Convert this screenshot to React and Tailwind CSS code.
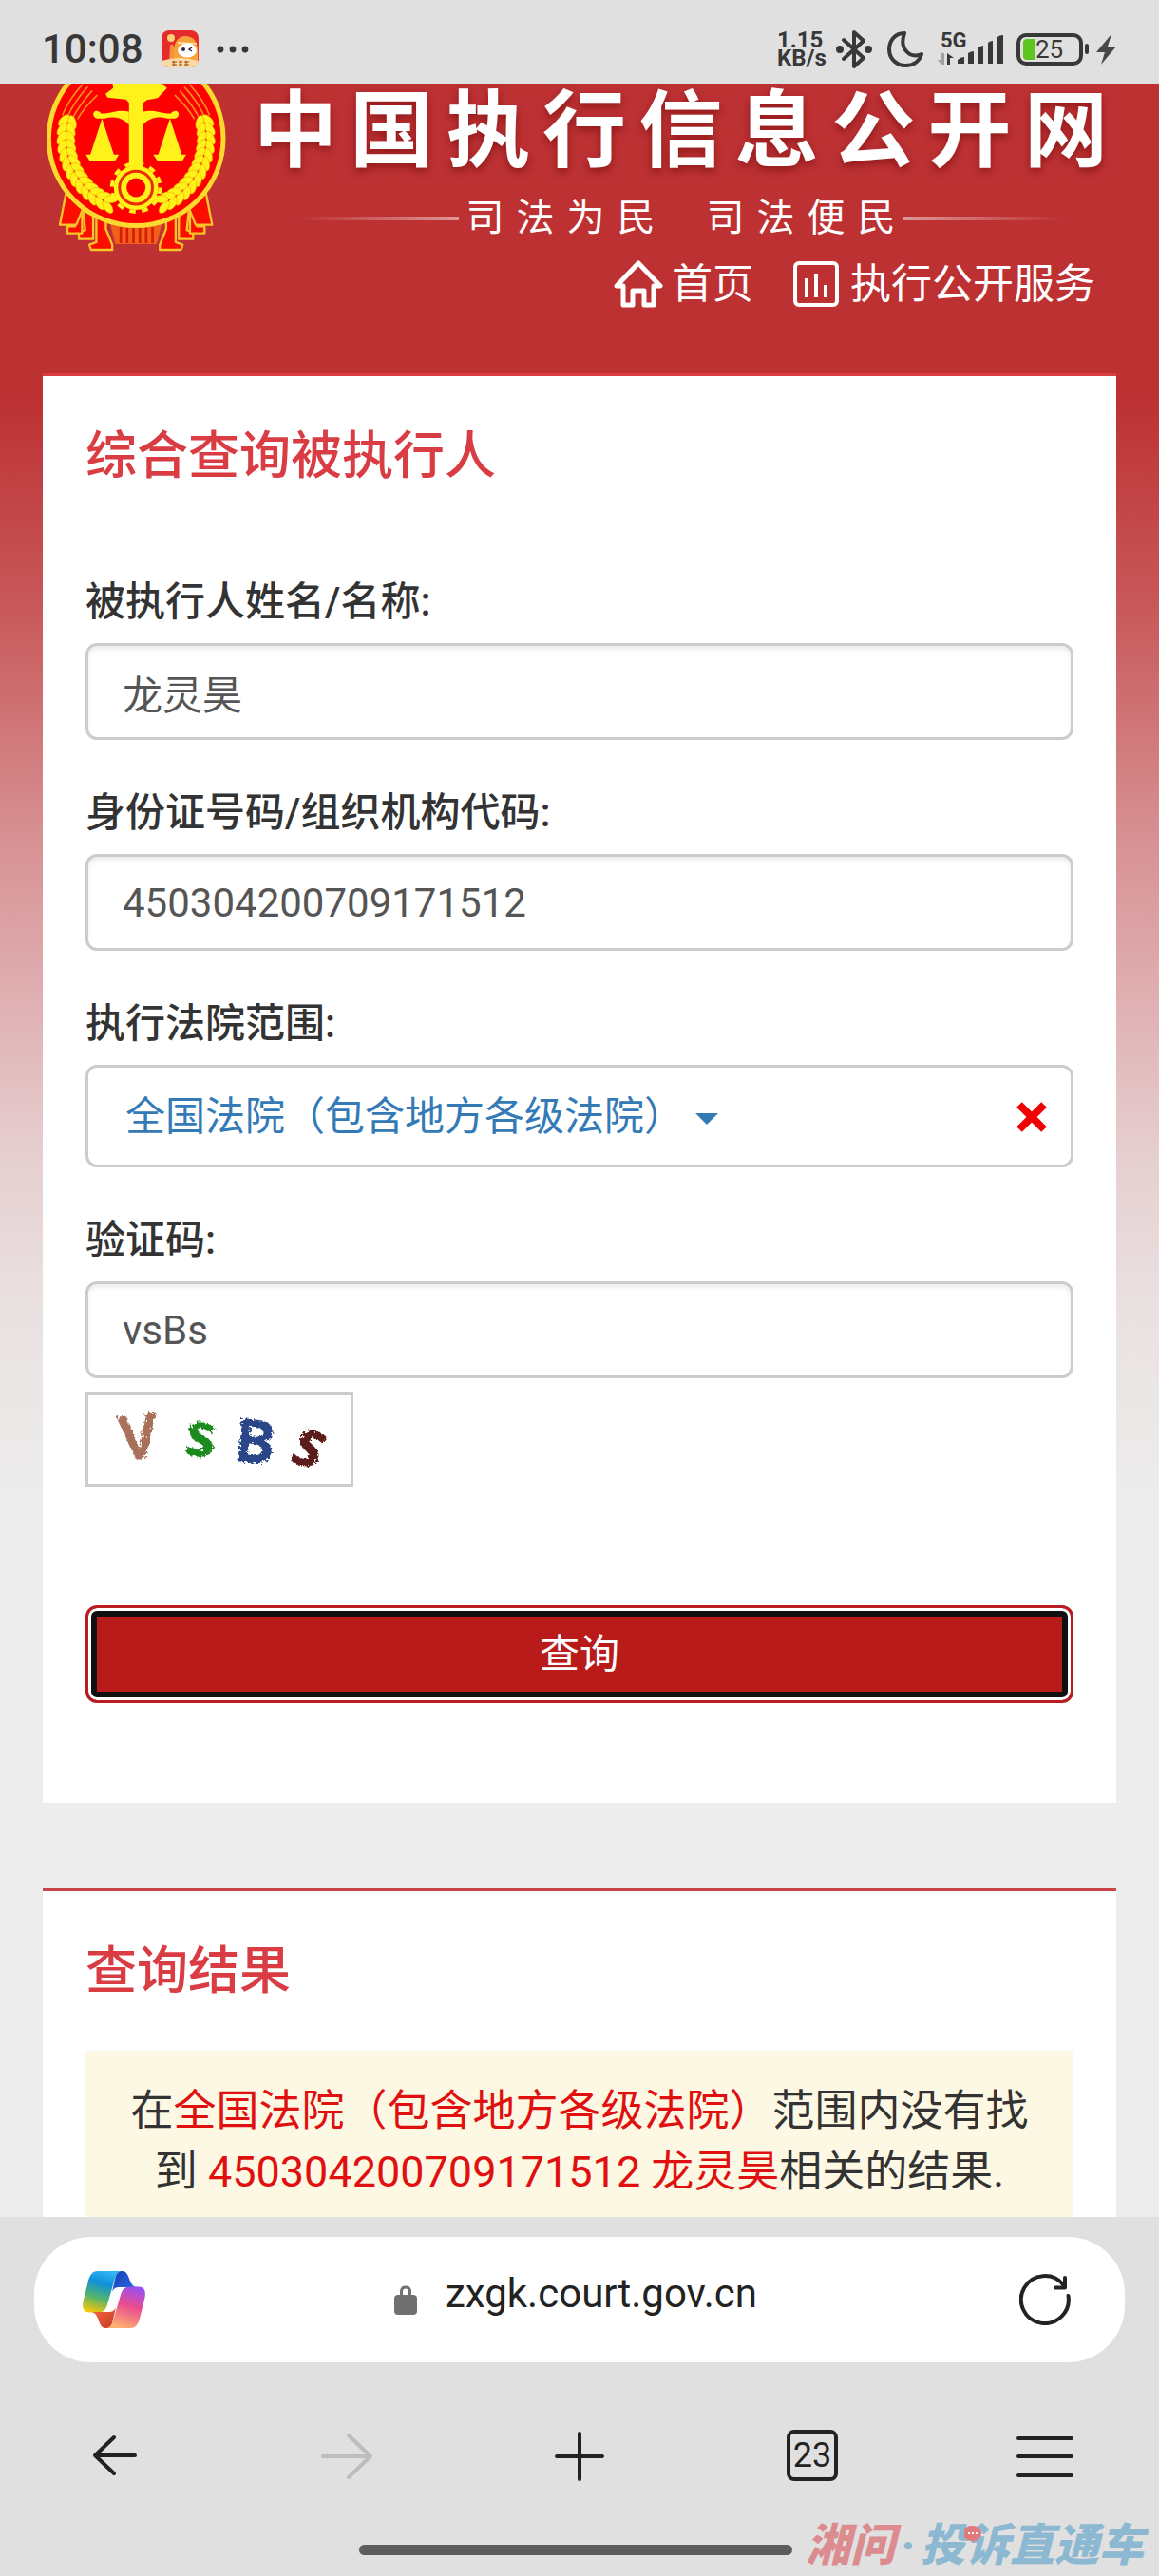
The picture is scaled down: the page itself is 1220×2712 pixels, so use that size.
import React, { useState } from "react";

const wheat = Array.from({ length: 13 }, (_, i) => {
  const deg = 194 - i * 6.8;
  const a = (deg * Math.PI) / 180;
  return { deg, cos: Math.cos(a), sin: Math.sin(a) };
});

function WheatEar() {
  return (
    <g fill="#fff21a" stroke="#f0a000" strokeWidth="1.5">
      {wheat.map(({ deg, cos, sin }) => (
        <g key={deg}>
          <ellipse cx={310 + 234 * cos} cy={185 + 234 * sin} rx="23" ry="12" transform={`rotate(${deg + 120} ${310 + 234 * cos} ${185 + 234 * sin})`} />
          <ellipse cx={310 + 207 * cos} cy={185 + 207 * sin} rx="23" ry="12" transform={`rotate(${deg + 62} ${310 + 207 * cos} ${185 + 207 * sin})`} />
        </g>
      ))}
    </g>
  );
}

function RibbonHalf() {
  return (
    <g stroke="#f9c42a" strokeWidth="7" fill="#fb0d00" strokeLinejoin="round">
      <path d="M215 420V470L235 520V536H168L163 520L185 512V420Z" />
      <path d="M175 400V502H130V482L150 474L140 380Z" />
      <path d="M135 380L140 430V484H94V462H118L110 370Z" />
      <path d="M92 345L70 457H122L145 400Z" />
    </g>
  );
}

function Emblem() {
  return (
    <svg viewBox="28 12 566 530" className="h-[177px] w-[189px] shrink-0" role="img" aria-label="法院徽章">
      <path d="M225 440H395L375 518H245Z" fill="#f0601c" />
      <path d="M262 465V515M282 465V515M302 465V515M322 465V515M342 465V515M362 465V515" stroke="#d81c00" strokeWidth="8" />
      <RibbonHalf />
      <g transform="translate(620 0) scale(-1 1)">
        <RibbonHalf />
      </g>
      <circle cx="310" cy="185" r="275" fill="#fe0000" stroke="#fada2c" strokeWidth="15" />
      <g fill="none" stroke="#f98a1c" strokeWidth="5">
        <path d="M78 112Q98 62 142 14M94 118Q112 72 158 22M110 122Q128 84 172 34M126 124Q142 92 188 48" />
        <path d="M542 112Q522 62 478 14M526 118Q508 72 462 22M510 122Q492 84 448 34M494 124Q478 92 432 48" />
      </g>
      <WheatEar />
      <g transform="translate(620 0) scale(-1 1)">
        <WheatEar />
      </g>
      <g fill="#fff21a">
        <path d="M288 12H332V280H288Z" />
        <path d="M236 12H392L408 26L378 58L345 64L330 74H290L278 62L220 56L214 44L238 26Z" />
        <path d="M288 100C250 92 225 108 200 106C190 92 172 98 176 112C182 128 200 120 212 122C240 114 268 120 288 142Z" />
        <path d="M332 100C370 92 395 108 420 106C430 92 448 98 444 112C438 128 420 120 408 122C380 114 352 120 332 142Z" />
        <path d="M203 122L240 236H256L244 256H164L152 236H166Z" />
        <path d="M417 122L454 236H468L456 256H378L364 236H380Z" />
      </g>
      <circle cx="310" cy="340" r="76" fill="none" stroke="#fff21a" strokeWidth="12" strokeDasharray="20 20" />
      <circle cx="310" cy="340" r="70" fill="#fff21a" />
      <circle cx="310" cy="340" r="52" fill="none" stroke="#ee2a00" strokeWidth="9" />
      <circle cx="310" cy="340" r="30" fill="#fe0000" />
    </svg>
  );
}

function AppBadge() {
  return (
    <svg viewBox="0 0 39 39" className="size-[39px]" aria-hidden="true">
      <rect width="39" height="39" rx="8" fill="#e62b2c" />
      <circle cx="10" cy="8" r="4" fill="#fbd277" />
      <path d="M8 34L9 16Q12 12 13 18V34Z" fill="#f6923a" />
      <path d="M13 34V20C14 8 22 4 30 7C38 10 39 18 38 34Z" fill="#f8a23c" />
      <path d="M17 13L37 14" stroke="#ffe9b0" strokeWidth="1.5" />
      <ellipse cx="27" cy="21" rx="10" ry="7.5" fill="#fff" />
      <circle cx="23" cy="20" r="2" fill="#3a2340" />
      <path d="M32 18L29 20L32 22" fill="none" stroke="#3a2340" strokeWidth="1.5" />
      <path d="M0 32Q19 26 39 32Q38 39 31 39H8Q1 39 0 32Z" fill="#fbd9a4" />
      <path d="M11 33H16M11 36H16M18 33H22M18 36H22M24 33H29M24 36H29M13 32V37M20 32V37M26 32V37" stroke="#9a4a1c" strokeWidth="1" />
    </svg>
  );
}

function StatusBar() {
  return (
    <div className="flex h-[88px] items-center justify-between bg-[#e0e0e0] pt-[15px] pr-[44px] pl-[44px] text-[#383838]">
      <div className="flex items-center">
        <span className="w-[126px] text-[42px] leading-[48px] font-medium">10:08</span>
        <AppBadge />
        <svg viewBox="0 0 34 8" className="ml-[19px] h-[8px] w-[34px]" fill="#383838" aria-hidden="true">
          <circle cx="4" cy="4" r="3.4" />
          <circle cx="17" cy="4" r="3.4" />
          <circle cx="30" cy="4" r="3.4" />
        </svg>
      </div>
      <div className="flex items-center">
        <span className="w-[62px] text-[24px] leading-[19px] font-bold">
          1.15
          <br />
          KB/s
        </span>
        <svg viewBox="0 0 38 42" className="h-[42px] w-[38px]" fill="none" stroke="#383838" strokeWidth="4" strokeLinejoin="round" strokeLinecap="round" aria-hidden="true">
          <path d="M8 11L29 30L19 39V3L29 12L8 31" />
          <circle cx="4" cy="21" r="2" fill="#383838" />
          <circle cx="34" cy="21" r="2" fill="#383838" />
        </svg>
        <svg viewBox="0 0 38 40" className="ml-[16px] h-[40px] w-[38px]" fill="none" stroke="#383838" strokeWidth="4" strokeLinejoin="round" aria-hidden="true">
          <path d="M18 3C7 3 2 12 2 20C2 30 10 37 19 37C28 37 34 32 36 25C24 30 12 20 18 3Z" />
        </svg>
        <svg viewBox="0 -10 70 50" className="mt-[-10px] ml-[15px] h-[50px] w-[70px]" aria-label="5G">
          <text x="3" y="18" className="text-[22px] font-bold" fill="#383838">5G</text>
          <path d="M7 24V36H4L0 31H3V24Z" fill="#a0a0a0" />
          <path d="M10 24L17 29H13V36H10Z" fill="#383838" />
          <path d="M21 35V31Q24 28 28 28V35ZM32 35V24Q35 22 38 22V35ZM43 35V18Q46 16 48 16V35ZM53 35V13Q55 11 58 11V35ZM63 35V7Q65 5 69 5V35Z" fill="#383838" />
        </svg>
        <span className="ml-[13px] flex h-[34px] w-[70px] items-center rounded-[10px] border-4 border-[#383838] pl-[3px]">
          <span className="h-[22px] w-[13px] rounded-l-[4px] bg-[#5cc61e]" />
          <span className="text-[26px] leading-[26px]">25</span>
        </span>
        <span className="ml-[2px] h-[11px] w-[4px] rounded-full bg-[#383838]" />
        <svg viewBox="0 0 22 32" className="ml-[8px] h-[32px] w-[22px]" fill="#484848" aria-hidden="true">
          <path d="M16 0L0 19H9L5 32L21 13H12Z" />
        </svg>
      </div>
    </div>
  );
}

function SpacedText({ text, className }) {
  return (
    <span className={className}>
      {[...text].map((c, i) => (
        <span key={i}>{c}</span>
      ))}
    </span>
  );
}

function SiteHeader() {
  return (
    <header className="flex items-start pr-[54px] pb-[67px] pl-[49px] text-white">
      <Emblem />
      <div className="ml-[29px] flex-1">
        <h1>
          <SpacedText text="中国执行信息公开网" className="flex justify-between text-[88px] leading-[100px] font-bold [text-shadow:0_4px_8px_rgba(100,0,0,0.5)]" />
        </h1>
        <p className="mt-[20px] flex items-center justify-center gap-[8px] text-[40px] leading-[44px]">
          <span className="h-[4px] w-[168px] bg-linear-to-r from-transparent to-white/50" />
          <SpacedText text="司法为民" className="flex gap-[13px]" />
          <SpacedText text="司法便民" className="ml-[46px] flex gap-[13px]" />
          <span className="h-[4px] w-[168px] bg-linear-to-l from-transparent to-white/50" />
        </p>
        <nav className="mt-[20px] flex items-center justify-end pr-[13px] text-[43px] leading-[54px]">
          <a href="#home" className="flex items-center gap-[9px]">
            <svg viewBox="0 0 52 50" className="h-[50px] w-[52px]" fill="none" stroke="currentColor" strokeWidth="5" strokeLinejoin="round" aria-hidden="true">
              <path d="M3 27L26 3L49 27H42V47H32V32H20V47H10V27Z" />
            </svg>
            首页
          </a>
          <a href="#service" className="ml-[42px] flex items-center gap-[12px]">
            <svg viewBox="0 0 48 48" className="size-[48px]" fill="none" stroke="currentColor" strokeWidth="4" aria-hidden="true">
              <rect x="2" y="2" width="44" height="44" rx="4" />
              <path d="M14 18V38M24 13V38M34 25V38" />
            </svg>
            执行公开服务
          </a>
        </nav>
      </div>
    </header>
  );
}

function Field({ id, label, value }) {
  const [text, setText] = useState(value);
  return (
    <div className="flex flex-col gap-[13px]">
      <label htmlFor={id} className="text-[42px] leading-[60px] font-medium text-[#333]">{label}</label>
      <input
        id={id}
        value={text}
        onChange={(e) => setText(e.target.value)}
        className="h-[102px] w-full rounded-[12px] border-3 border-[#ccc] bg-white px-[36px] text-[42px] text-[#555] shadow-[inset_0_4px_4px_rgba(0,0,0,0.07)]"
      />
    </div>
  );
}

function Captcha() {
  return (
    <svg viewBox="0 0 276 93" className="mt-[15px] h-[99px] w-[282px] border-3 border-[#ccc]" role="img" aria-label="验证码图片">
      <filter id="rough" x="-10%" y="-10%" width="120%" height="120%">
        <feTurbulence type="fractalNoise" baseFrequency="0.35" numOctaves="2" seed="4" />
        <feDisplacementMap in="SourceGraphic" scale="8" />
      </filter>
      <g filter="url(#rough)" className="font-['Open_Sans'] font-bold">
        <text x="32" y="66" fontSize="64" fill="#a9705a" transform="rotate(-6 55 45)">V</text>
        <text x="102" y="64" fontSize="64" fill="#1f8a1f" transform="rotate(6 118 48)">s</text>
        <text x="154" y="71" fontSize="64" fill="#2b4488" transform="rotate(6 175 48)">B</text>
        <text x="216" y="74" fontSize="68" fill="#5c1a1a" transform="rotate(14 230 58)" fontStyle="italic">s</text>
      </g>
    </svg>
  );
}

function QueryCard() {
  return (
    <section className="mx-[45px] border-t-3 border-[#d93c42] bg-white px-[45px] pt-[47px] pb-[105px]">
      <h2 className="text-[54px] leading-[75px] font-medium text-[#d93c42]">综合查询被执行人</h2>
      <form className="mt-[86px] flex flex-col" onSubmit={(e) => e.preventDefault()}>
        <div className="flex flex-col gap-[47px]">
          <Field id="name" label="被执行人姓名/名称:" value="龙灵昊" />
          <Field id="idno" label="身份证号码/组织机构代码:" value="450304200709171512" />
          <div className="flex flex-col gap-[13px]">
            <label htmlFor="court" className="text-[42px] leading-[60px] font-medium text-[#333]">执行法院范围:</label>
            <div className="flex h-[108px] items-center rounded-[12px] border-3 border-[#ccc] pt-[2px] pr-[25px] pl-[39px]">
              <select id="court" className="appearance-none bg-transparent text-[42px] leading-[60px] text-[#337ab7]">
                <option>全国法院（包含地方各级法院）</option>
              </select>
              <svg viewBox="0 0 24 12" className="mt-[4px] ml-[11px] h-[12px] w-[24px]" fill="#337ab7" aria-hidden="true">
                <path d="M0 0H24L12 12Z" />
              </svg>
              <button type="button" aria-label="清除" className="ml-auto">
                <svg viewBox="0 0 32 32" className="size-[32px]" stroke="#f00000" strokeWidth="8" strokeLinecap="butt" aria-hidden="true">
                  <path d="M3 3L29 29M29 3L3 29" />
                </svg>
              </button>
            </div>
          </div>
          <Field id="code" label="验证码:" value="vsBs" />
        </div>
        <Captcha />
        <button
          type="submit"
          className="mt-[125px] h-[103px] w-full rounded-[12px] border-3 border-[#bb1c22] bg-[#b91b1b] text-[42px] text-white shadow-[inset_0_0_0_3px_#fff,inset_0_0_0_9px_#101010]"
        >
          查询
        </button>
      </form>
    </section>
  );
}

function ResultCard() {
  return (
    <section className="mx-[45px] mt-[90px] flex flex-1 flex-col border-t-3 border-[#c9444a] bg-white px-[45px] pt-[47px]">
      <h2 className="text-[54px] leading-[75px] font-medium text-[#d93c42]">查询结果</h2>
      <p className="mt-[46px] flex-1 bg-[#fcf8e3] px-[45px] pt-[32px] text-center text-[45px] leading-[64px] text-[#333]">
        在<span className="text-[#e01010]">全国法院（包含地方各级法院）</span>范围内没有找到 <span className="text-[#e01010]">450304200709171512 龙灵昊</span>相关的结果.
      </p>
    </section>
  );
}

function CopilotLogo() {
  return (
    <svg viewBox="0 0 66 70" className="h-[70px] w-[66px]" aria-hidden="true">
      <defs>
        <linearGradient id="cool" x1="0.6" y1="0" x2="0.3" y2="1">
          <stop offset="0" stopColor="#30b4f2" />
          <stop offset="0.3" stopColor="#1090dc" />
          <stop offset="0.65" stopColor="#52b46c" />
          <stop offset="1" stopColor="#f2c60c" />
        </linearGradient>
        <linearGradient id="warm" x1="0.3" y1="1" x2="0.6" y2="0">
          <stop offset="0" stopColor="#9a50f0" />
          <stop offset="0.45" stopColor="#ea4c90" />
          <stop offset="1" stopColor="#fdb070" />
        </linearGradient>
        <linearGradient id="deep" x1="0" y1="0" x2="1" y2="1">
          <stop offset="0" stopColor="#1a3cb0" />
          <stop offset="1" stopColor="#2870ee" />
        </linearGradient>
        <linearGradient id="ember" x1="0" y1="0" x2="1" y2="1">
          <stop offset="0" stopColor="#c43a28" />
          <stop offset="1" stopColor="#fc6a3c" />
        </linearGradient>
      </defs>
      <g transform="translate(0 5)">
        <path d="M36 0H42C50 0 48 16 57 17H40C34 17 33 18 31 22Z" fill="url(#deep)" />
        <path d="M16 0H42C35 0 34 8 31 18L26 35C24 42 21 43.5 15 43.5H7C0 43.5 -1 37 1 30L6 10C8 3 11 0 16 0Z" fill="url(#cool)" />
        <g transform="rotate(180 33 30)">
          <path d="M36 0H42C50 0 48 16 57 17H40C34 17 33 18 31 22Z" fill="url(#ember)" />
          <path d="M16 0H42C35 0 34 8 31 18L26 35C24 42 21 43.5 15 43.5H7C0 43.5 -1 37 1 30L6 10C8 3 11 0 16 0Z" fill="url(#warm)" />
        </g>
      </g>
    </svg>
  );
}

function BrowserBar() {
  return (
    <footer className="relative bg-[#e0e0e0] pt-[21px] pb-[22px] text-[#222]">
      <div className="mx-[36px] flex h-[132px] items-center justify-between rounded-[60px] bg-white pr-[57px] pl-[51px]">
        <button type="button" aria-label="Copilot">
          <CopilotLogo />
        </button>
        <a href="#address" className="flex items-center gap-[30px] pr-[14px] pb-[12px]">
          <svg viewBox="0 0 24 31" className="mt-[12px] h-[31px] w-[24px]" aria-hidden="true">
            <path d="M7.500 11V6Q8 2 12 2Q16 2 16.500 6V11" fill="none" stroke="#707070" strokeWidth="3" />
            <rect y="10" width="24" height="21" rx="4" fill="#707070" />
          </svg>
          <span className="text-[42px] leading-[50px]">zxgk.court.gov.cn</span>
        </a>
        <button type="button" aria-label="刷新">
          <svg viewBox="0 0 54 54" className="size-[54px]" fill="none" stroke="#222" strokeWidth="4" strokeLinecap="round" strokeLinejoin="round" aria-hidden="true">
            <path d="M51.500 23A25 25 0 1 1 46 11M48 4V14.500H38" />
          </svg>
        </button>
      </div>
      <nav className="mt-[68px] flex h-[60px] items-center justify-between px-[90px]">
        <button type="button" aria-label="后退">
          <svg viewBox="0 0 60 60" className="size-[60px]" fill="none" stroke="#222" strokeWidth="4" strokeLinecap="round" strokeLinejoin="round" aria-hidden="true">
            <path d="M30 11L10 30L30 49M10 30H52" />
          </svg>
        </button>
        <button type="button" aria-label="前进">
          <svg viewBox="0 0 60 60" className="size-[60px]" fill="none" stroke="#bdbdbd" strokeWidth="4" strokeLinecap="round" strokeLinejoin="round" aria-hidden="true">
            <path d="M32 9L55 31L32 53M55 31H5" />
          </svg>
        </button>
        <button type="button" aria-label="新建标签页">
          <svg viewBox="0 0 60 60" className="size-[60px]" fill="none" stroke="#222" strokeWidth="4" strokeLinecap="round" aria-hidden="true">
            <path d="M30 7V55M6 31H54" />
          </svg>
        </button>
        <button type="button" aria-label="标签页" className="flex w-[60px] justify-center">
          <span className="flex h-[54px] w-[54px] items-center justify-center rounded-[8px] border-4 border-[#222] text-[36px] leading-[40px]">23</span>
        </button>
        <button type="button" aria-label="菜单">
          <svg viewBox="0 0 60 60" className="size-[60px]" fill="none" stroke="#222" strokeWidth="4" strokeLinecap="round" aria-hidden="true">
            <path d="M2 12H58M2 31H58M2 51H58" />
          </svg>
        </button>
      </nav>
      <div className="ml-[378px] mt-[64px] h-[11px] w-[456px] rounded-full bg-[#5d5d5d]" />
      <div className="absolute right-[16px] bottom-[7px] flex items-center text-[47px] leading-[50px] font-black text-[#8db8d1] italic">
        <span className="text-[#dc8c8f]">湘问</span>
        <span className="px-[6px]">·</span>
        <span className="relative">
          投诉直通车
          <svg viewBox="0 0 18 18" className="absolute top-[4px] left-[46px] size-[18px]" aria-hidden="true">
            <path d="M9 0A9 8 0 1 1 9 16L12 18L7 16A9 8 0 0 1 9 0Z" fill="#e0787c" />
            <path d="M4 8H6M8 8H10M12 8H14" stroke="#fff" strokeWidth="2" />
          </svg>
        </span>
      </div>
    </footer>
  );
}

export default function App() {
  return (
    <div className="flex min-h-screen flex-col bg-[#ededed] font-['Roboto','Noto_Sans_CJK_SC',sans-serif]">
      <StatusBar />
      <main className="flex flex-1 flex-col bg-[linear-gradient(to_bottom,#bd3133_0px,#bd3133_330px,#c8585a_550px,#d79092_790px,#dfadb0_950px,#e6cfd0_1130px,#eae2e2_1300px,#ededed_1500px)]">
        <SiteHeader />
        <QueryCard />
        <ResultCard />
      </main>
      <BrowserBar />
    </div>
  );
}
